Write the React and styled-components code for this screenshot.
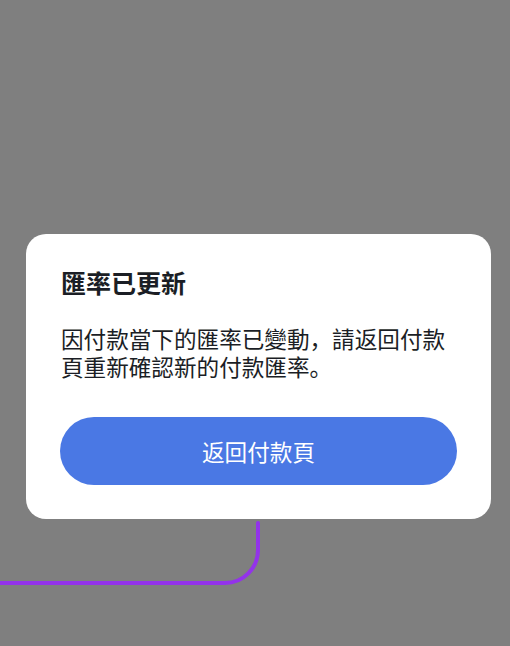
import React from 'react'
import styled, { createGlobalStyle } from 'styled-components'

const GlobalStyle = createGlobalStyle`
  html, body {
    margin: 0;
    padding: 0;
    background: #7f7f7f;
  }
  body {
    font-family: "Noto Sans CJK SC", "Noto Sans", sans-serif;
  }
`

const Page = styled.div`
  width: 510px;
  height: 646px;
  background: #7f7f7f;
  padding-top: 234px;
  box-sizing: border-box;
  overflow: hidden;
`

const Dialog = styled.div`
  width: 465px;
  height: 285px;
  margin-left: 26px;
  background: #ffffff;
  border-radius: 20px;
  padding: 31px 34px 0 35px;
  box-sizing: border-box;
  display: flex;
  flex-direction: column;
`

const Title = styled.h2`
  margin: 0;
  font-size: 25px;
  line-height: 34px;
  font-weight: 700;
  color: #1b1e25;
`

const Message = styled.p`
  margin: 26px 0 0;
  font-size: 22.6px;
  line-height: 28px;
  color: #1b1e25;
`

const PrimaryButton = styled.button`
  margin-top: 36px;
  margin-left: -1px;
  height: 68px;
  border: none;
  border-radius: 34px;
  background: #4a78e4;
  color: #ffffff;
  font-family: inherit;
  font-size: 22.6px;
  cursor: pointer;
`

const Trail = styled.svg`
  display: block;
  width: 510px;
  height: 127px;
`

export default function App() {
  return (
    <>
      <GlobalStyle />
      <Page>
        <Dialog>
          <Title>匯率已更新</Title>
          <Message>因付款當下的匯率已變動，請返回付款頁重新確認新的付款匯率。</Message>
          <PrimaryButton>返回付款頁</PrimaryButton>
        </Dialog>
        <Trail viewBox="0 0 510 127">
          <path
            d="M258 4 V31 A33 33 0 0 1 225 64 H-5"
            fill="none"
            stroke="#9333ea"
            strokeWidth="4"
            strokeLinecap="round"
          />
        </Trail>
      </Page>
    </>
  )
}
